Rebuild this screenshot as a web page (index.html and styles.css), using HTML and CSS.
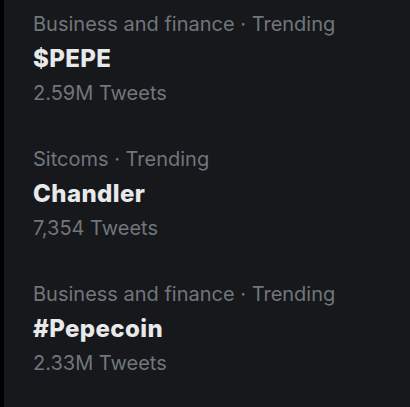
FILE: index.html
```html
<!DOCTYPE html>
<html>
<head>
<meta charset="utf-8">
<link rel="stylesheet" href="styles.css">
</head>
<body>
<div class="frame">
  <div class="panel">
    <div class="trend">
      <div class="meta">Business and finance · Trending</div>
      <div class="title">$PEPE</div>
      <div class="count">2.59M Tweets</div>
    </div>
    <div class="trend">
      <div class="meta">Sitcoms · Trending</div>
      <div class="title">Chandler</div>
      <div class="count">7,354 Tweets</div>
    </div>
    <div class="trend">
      <div class="meta">Business and finance · Trending</div>
      <div class="title">#Pepecoin</div>
      <div class="count">2.33M Tweets</div>
    </div>
  </div>
</div>
</body>
</html>
```
FILE: styles.css
```css
html, body {
  margin: 0;
  padding: 0;
  background: #000;
  height: 100%;
}
.frame {
  display: flex;
  height: 100%;
  padding-left: 4px;
  box-sizing: border-box;
}
.panel {
  flex: 1;
  background: #16181c;
  padding: 7px 0 0 29px;
  display: flex;
  flex-direction: column;
  gap: 31.5px;
  font-family: Inter, "Liberation Sans", Arial, sans-serif;
}
.trend {
  display: flex;
  flex-direction: column;
}
.meta, .count {
  font-size: 20px;
  line-height: 34.5px;
  color: #71767b;
}
.title {
  font-size: 24px;
  line-height: 34.5px;
  font-weight: 800;
  letter-spacing: 0.4px;
  color: #e7e9ea;
}
```
